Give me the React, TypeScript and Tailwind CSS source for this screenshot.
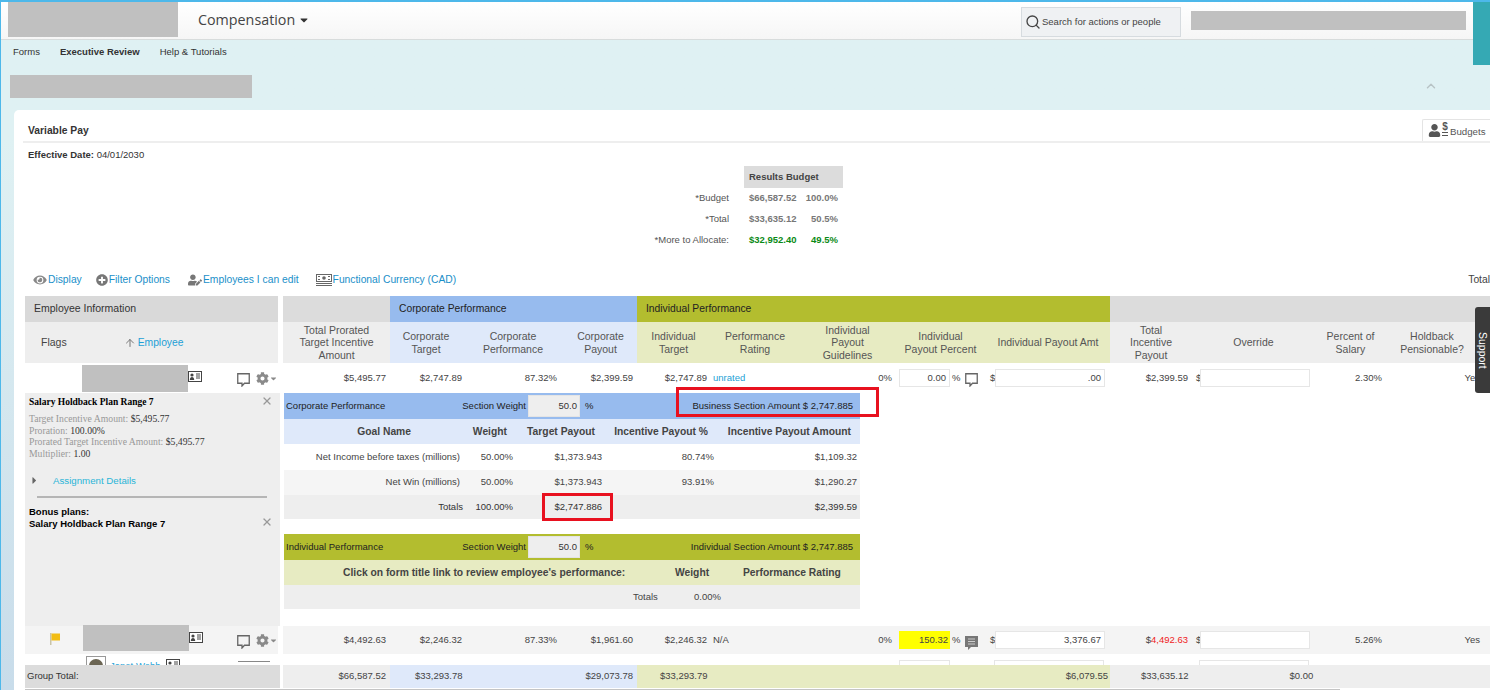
import { ArrowUp, ChevronUp, Search, X } from 'lucide-react';
import { FaCaretDown, FaCaretRight, FaCog, FaEye, FaPlusCircle, FaUser, FaUserEdit } from 'react-icons/fa';

const cols = 'grid grid-cols-[107px_72px_102px_73px_73px_90px_95px_91px_124px_82px_123px_71px_104px]';
const goalCols = 'grid grid-cols-[180px_53px_89px_112px_142px]';

function Redacted({ className }: { className: string }) {
    return <div className={`bg-[#c0c0c0] ${className}`} />;
}

function CardIcon() {
    return (
        <svg width="14" height="11" viewBox="0 0 14 11" className="text-[#444]">
            <rect x="0.5" y="0.5" width="13" height="10" fill="#fff" stroke="currentColor" />
            <circle cx="4" cy="4" r="1.6" fill="currentColor" />
            <path d="M1.8 9c0-2 1-3 2.2-3s2.2 1 2.2 3z" fill="currentColor" />
            <path d="M8 3h4M8 5h4M8 7h4" stroke="currentColor" />
        </svg>
    );
}

function BillIcon() {
    return (
        <svg width="16" height="13" viewBox="0 0 16 13" className="text-[#666]">
            <rect x="0.5" y="0.5" width="15" height="7" fill="none" stroke="currentColor" />
            <circle cx="8" cy="4" r="1.8" fill="currentColor" />
            <path d="M2 2.5h2M12 2.5h2M2 5.5h2M12 5.5h2" stroke="currentColor" />
            <path d="M0 9.5h16M0 11.5h16" stroke="currentColor" />
        </svg>
    );
}

function CommentIcon({ className = '' }: { className?: string }) {
    return (
        <svg width="13" height="14" viewBox="0 0 13 14" className={className}>
            <path d="M.75.75h11.5v9.5H7.5L5 13v-2.75H.75z" fill="none" stroke="#666" strokeWidth="1.3" />
        </svg>
    );
}

function RowActions() {
    return (
        <div className="ml-auto flex items-center">
            <CommentIcon className="mt-[3px]" />
            <FaCog className="ml-[6px] h-[13px] w-[13px] text-[#8a8a8a]" />
            <FaCaretDown className="h-[9px] w-[9px] text-[#8a8a8a]" />
        </div>
    );
}

function Input({ value, className }: { value?: string; className: string }) {
    return (
        <div className={`flex h-[18px] items-center justify-end border border-[#e6e6e6] bg-white pr-[3px] ${className}`}>
            {value}
        </div>
    );
}

function Cell({ children, pr = 'pr-[4px]' }: { children?: React.ReactNode; pr?: string }) {
    return <div className={`flex items-center justify-end ${pr}`}>{children}</div>;
}

type RowData = {
    total: string;
    corpTarget: string;
    corpPerf: string;
    corpPayout: string;
    indTarget: string;
    rating: React.ReactNode;
    percent: React.ReactNode;
    comment: React.ReactNode;
    amount: string;
    payout: React.ReactNode;
    salary: string;
};

function DataCells({ row }: { row: RowData }) {
    return (
        <div className={`${cols} h-full text-[9.5px] text-[#444]`}>
            <Cell>{row.total}</Cell>
            <Cell pr="pr-0">{row.corpTarget}</Cell>
            <Cell pr="pr-[7px]">{row.corpPerf}</Cell>
            <Cell>{row.corpPayout}</Cell>
            <Cell pr="pr-[3px]">{row.indTarget}</Cell>
            <div className="flex items-center pl-[3px]">{row.rating}</div>
            <Cell pr="pr-[3px]">0%</Cell>
            <div className="flex items-center pl-[4px]">
                {row.percent}
                <span className="ml-[2px]">%</span>
                {row.comment}
            </div>
            <div className="flex items-center pl-[4px]">
                <span className="w-[5px]">$</span>
                <Input value={row.amount} className="w-[110px]" />
            </div>
            <Cell>{row.payout}</Cell>
            <div className="flex items-center pl-[4px]">
                <span className="w-[4px]">$</span>
                <Input className="w-[110px]" />
            </div>
            <Cell pr="pr-[4px]">{row.salary}</Cell>
            <Cell pr="pr-[10px]">Yes</Cell>
        </div>
    );
}

const rowOne: RowData = {
    total: '$5,495.77',
    corpTarget: '$2,747.89',
    corpPerf: '87.32%',
    corpPayout: '$2,399.59',
    indTarget: '$2,747.89',
    rating: <span className="font-medium text-[#1d9fd6]">unrated</span>,
    percent: <Input value="0.00" className="w-[51px]" />,
    comment: <CommentIcon className="ml-[5px] mt-[4px]" />,
    amount: '.00',
    payout: '$2,399.59',
    salary: '2.30%',
};

const rowTwo: RowData = {
    total: '$4,492.63',
    corpTarget: '$2,246.32',
    corpPerf: '87.33%',
    corpPayout: '$1,961.60',
    indTarget: '$2,246.32',
    rating: <span>N/A</span>,
    percent: <div className="flex h-[18px] w-[51px] items-center justify-end bg-[#ffff00] pr-[2px]">150.32</div>,
    comment: (
        <svg width="13" height="14" viewBox="0 0 13 14" className="ml-[5px] mt-[5px]">
            <path d="M0 0h13v11H6l-3 3v-3H0z" fill="#777" />
            <path d="M3 3h7M3 5.5h7M3 8h7" stroke="#ccc" />
        </svg>
    ),
    amount: '3,376.67',
    payout: (
        <span>
            $<span className="text-[#f01c24]">4,492.63</span>
        </span>
    ),
    salary: '5.26%',
};

const goals = [
    { name: 'Net Income before taxes (millions)', amount: '$1,109.32', pct: '80.74%', bg: 'bg-white' },
    { name: 'Net Win (millions)', amount: '$1,290.27', pct: '93.91%', bg: 'bg-[#f5f5f5]' },
];

function SectionBand({ title, amount, bg }: { title: string; amount: string; bg: string }) {
    return (
        <div className={`flex h-[26px] items-center pl-[2px] pr-[7px] text-[9.5px] text-[#222] ${bg}`}>
            <span className="w-[174px]">{title}</span>
            <span className="w-[66px] whitespace-nowrap text-right">Section Weight</span>
            <div className="ml-[2px] flex h-[22px] w-[52px] items-center justify-end border border-[#e4e4e4] bg-[#eee] pr-[2px] text-[#333]">
                50.0
            </div>
            <span className="ml-[5px]">%</span>
            <span className="ml-auto whitespace-nowrap">{amount}</span>
        </div>
    );
}

function LeftPanel() {
    return (
        <div className="h-full w-[255px] bg-[#eee] pl-[4px] pr-[6px] pt-[3px] text-[#222]">
            <div className="flex items-start justify-between">
                <span className="font-['Liberation_Serif',serif] text-[9.5px] font-bold leading-[13px] text-black">
                    Salary Holdback Plan Range 7
                </span>
                <X strokeWidth={2.5} className="mr-[1px] mt-[-1px] h-[12px] w-[12px] text-[#999]" />
            </div>
            <div className="mt-[4px] font-['Liberation_Serif',serif] text-[9.7px] leading-[11.7px] text-[#333]">
                <div><span className="text-[#999]">Target Incentive Amount:</span> $5,495.77</div>
                <div><span className="text-[#999]">Proration:</span> 100.00%</div>
                <div><span className="text-[#999]">Prorated Target Incentive Amount:</span> $5,495.77</div>
                <div><span className="text-[#999]">Multiplier:</span> 1.00</div>
            </div>
            <div className="mt-[14px] flex h-[14px] items-center">
                <FaCaretRight className="h-[11px] w-[11px] text-[#666]" />
                <span className="ml-[13px] text-[9.7px] text-[#2bb5d8]">Assignment Details</span>
            </div>
            <div className="ml-[8px] mt-[8px] h-[2px] w-[230px] bg-[#b5b5b5]" />
            <div className="mt-[8px] flex items-center justify-between text-[9.5px] font-bold leading-[12px] text-black">
                <div>
                    <div>Bonus plans:</div>
                    <div>Salary Holdback Plan Range 7</div>
                </div>
                <X strokeWidth={2.5} className="mr-[1px] mt-[8px] h-[12px] w-[12px] text-[#999]" />
            </div>
        </div>
    );
}

function GoalTables() {
    return (
        <div className="w-[576px]">
            <SectionBand title="Corporate Performance" amount="Business Section Amount $ 2,747.885" bg="bg-[#97bbee]" />
            <div className={`${goalCols} h-[25px] items-center bg-[#dfe9fa] text-right text-[10.3px] font-bold text-[#444]`}>
                <span className="pr-[53px]">Goal Name</span>
                <span className="pr-[10px]">Weight</span>
                <span className="pr-[11px]">Target Payout</span>
                <span className="pr-[10px]">Incentive Payout %</span>
                <span className="pr-[9px]">Incentive Payout Amount</span>
            </div>
            {goals.map((goal) => (
                <div key={goal.name} className={`${goalCols} h-[25.5px] items-center text-right text-[9.5px] text-[#444] ${goal.bg}`}>
                    <span className="whitespace-nowrap pr-[4px]">{goal.name}</span>
                    <span className="pr-[4px]">50.00%</span>
                    <span className="pr-[4px]">$1,373.943</span>
                    <span className="pr-[4px]">{goal.pct}</span>
                    <span className="pr-[3px]">{goal.amount}</span>
                </div>
            ))}
            <div className={`${goalCols} h-[24px] items-center bg-[#eee] text-right text-[9.5px] text-[#333]`}>
                <span className="pr-[1px]">Totals</span>
                <span className="pr-[4px]">100.00%</span>
                <span className="pr-[4px]">$2,747.886</span>
                <span />
                <span className="pr-[3px]">$2,399.59</span>
            </div>

            <div className="mt-[15px]">
                <SectionBand title="Individual Performance" amount="Individual Section Amount $ 2,747.885" bg="bg-[#b3bd2f]" />
            </div>
            <div className="flex h-[25px] items-center bg-[#e7ebc2] text-[10.3px] font-bold text-[#444]">
                <span className="ml-[59px] w-[332px] whitespace-nowrap">Click on form title link to review employee's performance:</span>
                <span className="w-[68px]">Weight</span>
                <span className="whitespace-nowrap">Performance Rating</span>
            </div>
            <div className="flex h-[24px] items-center bg-[#eee] text-[9.5px] text-[#444]">
                <span className="ml-[349px] w-[61px]">Totals</span>
                <span>0.00%</span>
            </div>
        </div>
    );
}

function HeaderCell({ bg, children }: { bg: string; children: React.ReactNode }) {
    return <div className={`flex items-center justify-center ${bg}`}><div>{children}</div></div>;
}

export default function App() {
    return (
        <div className="relative h-[690px] w-[1490px] overflow-hidden border-l border-t-2 border-[#4db8ea] bg-gradient-to-b from-[#dff1f3] from-[20%] to-[#c8dcea] font-['Liberation_Sans',Arial,sans-serif]">
            <div className="absolute right-0 top-0 h-[63px] w-[17px] bg-[#35a9b4]" />

            <header className="flex h-[38px] items-start border-b border-[#d8dcdc] bg-gradient-to-b from-white to-[#f6f6f6] pr-[17px]">
                <Redacted className="ml-[7px] h-[35px] w-[170px]" />
                <div className="ml-[20px] mt-[8px] flex items-center font-['Open_Sans',sans-serif] text-[14.3px] leading-[20px] text-[#444]">
                    Compensation
                    <FaCaretDown className="ml-[3px] h-[12px] w-[12px] text-[#333]" />
                </div>
                <div className="ml-auto mt-[5px] flex h-[30px] w-[160px] items-center border border-[#d6dbdf] bg-[#eff1f3] pl-[3px] text-[9.5px] text-[#444]">
                    <Search className="h-[16px] w-[16px] shrink-0 text-[#444]" />
                    <span className="ml-px whitespace-nowrap">Search for actions or people</span>
                </div>
                <Redacted className="ml-[10px] mr-[7px] mt-[9px] h-[19px] w-[275px]" />
            </header>

            <nav className="flex h-[24px] items-center gap-[20px] pl-[12px] text-[9.5px] text-[#333]">
                <span>Forms</span>
                <span className="font-bold">Executive Review</span>
                <span>Help &amp; Tutorials</span>
            </nav>

            <div className="mt-[11px] flex h-[23px] items-start pl-[9px]">
                <Redacted className="h-[23px] w-[242px]" />
                <ChevronUp strokeWidth={2.5} className="ml-auto mr-[52px] mt-[4px] h-[14px] w-[14px] text-[#b8c4c6]" />
            </div>

            <main className="ml-[13px] mt-[12px] h-[580px] rounded-tl-[5px] bg-white">
                <div className="ml-[9px] flex h-[33px] items-end justify-between border-b-2 border-[#eee]">
                    <span className="pb-[3px] pl-[5px] text-[10.3px] font-bold leading-[14px] text-[#333]">Variable Pay</span>
                    <div className="flex h-[22px] w-[68px] items-center gap-[1px] rounded-tl-[2px] border-l border-t border-[#e4e4e4] bg-white pl-[5px] text-[9.7px] text-[#555]">
                        <FaUser className="h-[13px] w-[13px] text-[#555]" />
                        <div className="mb-[3px] flex flex-col items-center text-[10px] font-bold leading-[8px]">
                            $<span className="mt-px h-[4px] w-[6px] border-y border-[#555]" />
                        </div>
                        <span className="ml-[1px] mt-[3px]">Budgets</span>
                    </div>
                </div>
                <div className="ml-[14px] mt-[6px] text-[9.5px] leading-[12px] text-[#333]">
                    <span className="font-bold">Effective Date:</span> 04/01/2030
                </div>

                <div className="mt-[5px] flex pl-[610px] text-[9.5px] text-[#555]">
                    <div className="w-[120px]">
                        <div className="h-[22px]" />
                        <div className="flex h-[21px] items-center justify-end pr-[15px]">*Budget</div>
                        <div className="flex h-[21px] items-center justify-end pr-[15px]">*Total</div>
                        <div className="flex h-[21px] items-center justify-end whitespace-nowrap pr-[15px]">*More to Allocate:</div>
                    </div>
                    <div className="w-[99px]">
                        <div className="flex h-[22px] items-center bg-[#dcdcdc] pl-[5px] font-bold text-[#444]">Results Budget</div>
                        <div className="flex h-[21px] items-center justify-between pl-[5px] pr-[5px] font-bold text-[#777]">
                            <span>$66,587.52</span><span>100.0%</span>
                        </div>
                        <div className="flex h-[21px] items-center justify-between pl-[5px] pr-[5px] font-bold text-[#777]">
                            <span>$33,635.12</span><span>50.5%</span>
                        </div>
                        <div className="flex h-[21px] items-center justify-between pl-[5px] pr-[5px] font-bold text-[#0a8a16]">
                            <span>$32,952.40</span><span>49.5%</span>
                        </div>
                    </div>
                </div>

                <div className="mt-[20px] flex h-[18px] items-center pl-[19px] text-[10.3px] text-[#1a8fc9]">
                    <FaEye className="h-[12px] w-[14px] text-[#888]" />
                    <span className="ml-[1px]">Display</span>
                    <FaPlusCircle className="ml-[14px] h-[12px] w-[12px] text-[#777]" />
                    <span className="ml-px">Filter Options</span>
                    <FaUserEdit className="ml-[18px] h-[12px] w-[14px] text-[#777]" />
                    <span className="ml-px">Employees I can edit</span>
                    <div className="ml-[17px]"><BillIcon /></div>
                    <span className="ml-px">Functional Currency (CAD)</span>
                    <span className="ml-auto text-[#444]">Total</span>
                </div>

                <div className="relative mt-[7px] pl-[11px]">
                    {/* band and column headers */}
                    <div className="flex h-[26px]">
                        <div className="flex w-[253px] items-center bg-[#d9d9d9] pl-[9px] text-[10.5px] text-[#333]">Employee Information</div>
                        <div className={`${cols} ml-[5px] text-[10.3px]`}>
                            <div className="bg-[#dcdcdc]" />
                            <div className="col-span-3 flex items-center bg-[#97bbee] pl-[9px] text-[#222]">Corporate Performance</div>
                            <div className="col-span-5 flex items-center bg-[#b3bd2f] pl-[9px] text-[#222]">Individual Performance</div>
                            <div className="col-span-4 bg-[#dcdcdc]" />
                        </div>
                    </div>
                    <div className="flex h-[41px]">
                        <div className="flex w-[253px] items-center bg-[#eee] text-[10.5px] text-[#444]">
                            <span className="ml-[16px]">Flags</span>
                            <ArrowUp className="ml-[57px] h-[12px] w-[12px] text-[#777]" />
                            <span className="ml-[2px] text-[10.3px] text-[#1d9fd6]">Employee</span>
                        </div>
                        <div className={`${cols} ml-[5px] text-center text-[10.5px] leading-[12.5px] text-[#555]`}>
                            <HeaderCell bg="bg-[#eee]">Total Prorated<br />Target Incentive<br />Amount</HeaderCell>
                            <HeaderCell bg="bg-[#dfe9fa]">Corporate<br />Target</HeaderCell>
                            <HeaderCell bg="bg-[#dfe9fa]">Corporate<br />Performance</HeaderCell>
                            <HeaderCell bg="bg-[#dfe9fa]">Corporate<br />Payout</HeaderCell>
                            <HeaderCell bg="bg-[#e7ebc2]">Individual<br />Target</HeaderCell>
                            <HeaderCell bg="bg-[#e7ebc2]">Performance<br />Rating</HeaderCell>
                            <HeaderCell bg="bg-[#e7ebc2]">Individual<br />Payout<br />Guidelines</HeaderCell>
                            <HeaderCell bg="bg-[#e7ebc2]">Individual<br />Payout Percent</HeaderCell>
                            <HeaderCell bg="bg-[#e7ebc2]">Individual Payout Amt</HeaderCell>
                            <HeaderCell bg="bg-[#eee]">Total<br />Incentive<br />Payout</HeaderCell>
                            <HeaderCell bg="bg-[#eee]">Override</HeaderCell>
                            <HeaderCell bg="bg-[#eee]">Percent of<br />Salary</HeaderCell>
                            <HeaderCell bg="bg-[#eee]"><span className="block pr-[12px]">Holdback<br />Pensionable?</span></HeaderCell>
                        </div>
                    </div>

                    {/* first employee */}
                    <div className="flex h-[30px]">
                        <div className="flex w-[253px] items-center">
                            <Redacted className="ml-[57px] h-[27px] w-[106px]" />
                            <div className="mb-[4px]"><CardIcon /></div>
                            <RowActions />
                        </div>
                        <div className="ml-[5px]"><DataCells row={rowOne} /></div>
                    </div>

                    {/* expanded detail */}
                    <div className="flex h-[233px]">
                        <LeftPanel />
                        <div className="ml-[4px]"><GoalTables /></div>
                    </div>

                    {/* second employee */}
                    <div className="flex h-[28px]">
                        <div className="flex w-[253px] items-center bg-[#f4f4f4]">
                            <svg width="11" height="12" viewBox="0 0 11 12" className="mb-[3px] ml-[24px]">
                                <path d="M1 0h1.5v12H1z" fill="#c9c4a8" />
                                <path d="M2.5 .5H11v7H2.5z" fill="#f2bd14" />
                            </svg>
                            <Redacted className="ml-[23px] mt-[-1px] h-[26px] w-[106px] self-start" />
                            <div className="mb-[6px]"><CardIcon /></div>
                            <RowActions />
                        </div>
                        <div className="ml-[5px] bg-[#f4f4f4]"><DataCells row={rowTwo} /></div>
                    </div>

                    {/* third employee, cut off by the total row */}
                    <div className="flex h-[11px] overflow-hidden">
                        <div className="flex w-[253px] items-start">
                            <div className="ml-[61px] mt-[2px] h-[20px] w-[20px] border border-[#999] bg-white p-[2px]">
                                <div className="h-[14px] w-[14px] rounded-full bg-[#6b6553]" />
                            </div>
                            <span className="ml-[4px] mt-[6px] text-[9.5px] leading-[12px] text-[#1d9fd6]">Janet Webb</span>
                            <div className="ml-[5px] mt-[5px]"><CardIcon /></div>
                            <div className="ml-auto mr-[8px] mt-[7px] h-[10px] w-[32px] border-t border-[#888]" />
                        </div>
                        <div className="ml-[5px] flex pt-[6px]">
                            <div className="ml-[616px] h-[18px] w-[51px] border border-[#e6e6e6]" />
                            <div className="ml-[44px] h-[18px] w-[110px] border border-[#e6e6e6]" />
                            <div className="ml-[95px] h-[18px] w-[110px] border border-[#e6e6e6]" />
                        </div>
                    </div>

                    {/* group total */}
                    <div className="flex h-[23px] text-[9.5px] text-[#444]">
                        <div className="flex w-[255px] items-center bg-[#dcdcdc] pl-[2px] text-[#333]">Group Total:</div>
                        <div className={`${cols} ml-[3px]`}>
                            <div className="flex items-center justify-end bg-[#eee] pr-[4px]">$66,587.52</div>
                            <div className="col-span-3 flex items-center justify-between bg-[#dfe9fa] pr-[4px]">
                                <span className="ml-[25px]">$33,293.78</span>
                                <span>$29,073.78</span>
                            </div>
                            <div className="col-span-5 flex items-center justify-between bg-[#e7ebc2] pr-[2px]">
                                <span className="ml-[23px]">$33,293.79</span>
                                <span>$6,079.55</span>
                            </div>
                            <div className="col-span-4 flex items-center bg-[#eee]">
                                <span className="ml-[31px]">$33,635.12</span>
                                <span className="ml-[101px]">$0.00</span>
                            </div>
                        </div>
                    </div>
                    <div className="mt-px h-[2px] w-[1315px] bg-[#c4c4c4]" />

                    {/* red callouts drawn over the table */}
                    <div className="absolute left-[662px] top-[91px] h-[30px] w-[203px] border-[3px] border-[#e8111f]" />
                    <div className="absolute left-[528px] top-[197px] h-[28px] w-[71px] border-[3px] border-[#e8111f]" />
                </div>
            </main>

            <div className="absolute right-0 top-[305px] flex h-[86px] w-[15px] items-center justify-center rounded-l-[3px] bg-[#3a3a3a] text-[10.5px] text-white [writing-mode:vertical-rl]">
                Support
            </div>
        </div>
    );
}
